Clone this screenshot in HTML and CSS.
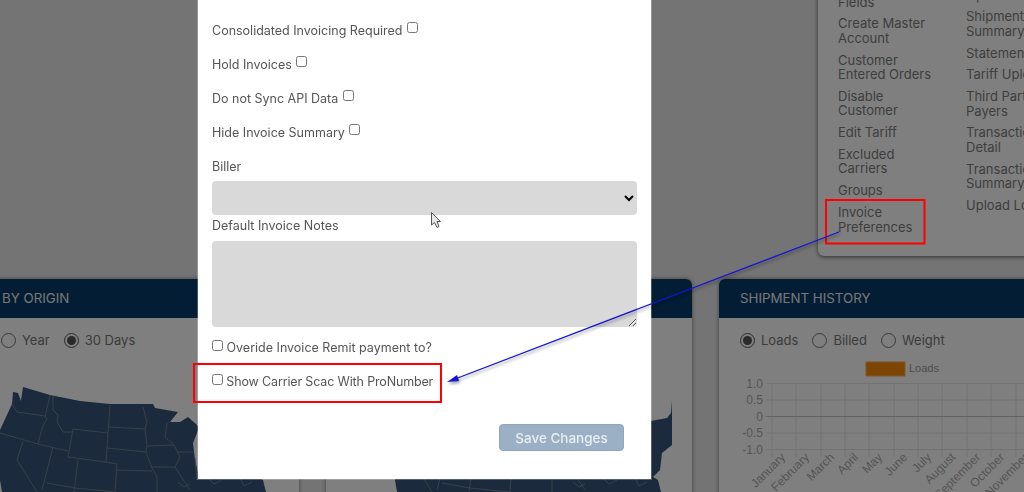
FILE: index.html
```html
<!DOCTYPE html>
<html lang="en">
<head>
    <meta charset="UTF-8">
    <meta name="viewport" content="width=device-width, initial-scale=1.0">
    <title>Invoice Preferences</title>
    <link rel="stylesheet" href="styles.css">
</head>
<body>
    <svg class="defs" width="0" height="0">
        <symbol id="usmap" viewBox="0 380 280 112">
            <path class="land" d="M-6 430L0 430L12 404L13 392L18 393L21 401L23 387L50 395L80 401L110 404L153 404L155 408L178 412L170 422L180 422L188 417L197 425L199 428L193 443L195 460L199 477L230 470L256 421L272 418L276 413L277 400L277 435L277 445L267 453L265 470L258 477L263 480L266 492L2 492L0 480Z"/>
            <path class="lines" d="M12 404L17 412L45 416M50 395L45 417L47 419L42 428L38 444M53 396L53 410L58 415L57 422L63 432L72 432M73 429L108 433L106 462L68 457ZM0 433L38 444L68 451M23 441L17 460L37 492M53 447L42 490M78 460L74 492M106 462L117 464L115 492M47 483L75 488L115 492M110 405L108 433M108 427L145 429M143 407L147 422L145 429L147 445L146 452M107 448L146 452L152 468L157 477L157 492M117 470L152 471M147 446L174 445M167 423L165 437L174 445M152 467L175 467M174 445L180 457L175 467L182 478L190 490M177 452L193 452M195 458L197 480M178 482L184 487L190 484M208 478L214 484L222 480M240 478L244 486L252 482"/>
        </symbol>
    </svg>

    <div class="dash">
        <div class="card card-first">
            <div class="card-title">BY ORIGIN</div>
            <div class="card-body">
                <div class="radios">
                    <label><input type="radio" name="r1"> Year</label>
                    <label><input type="radio" name="r1" checked> 30 Days</label>
                </div>
                <svg class="map map-first"><use href="#usmap"/></svg>
            </div>
        </div>
        <div class="card card-mid">
            <div class="card-title">BY DESTINATION</div>
            <div class="card-body">
                <div class="radios"></div>
                <svg class="map map-second"><use href="#usmap"/></svg>
            </div>
        </div>
        <div class="card card-mid">
            <div class="card-title">SHIPMENT HISTORY</div>
            <div class="card-body">
                <div class="radios">
                    <label><input type="radio" name="r3" checked> Loads</label>
                    <label><input type="radio" name="r3"> Billed</label>
                    <label><input type="radio" name="r3"> Weight</label>
                </div>
                <svg class="chart" viewBox="719 355 366 137">
                    <rect class="swatch" x="866" y="362" width="39" height="14"/>
                    <text class="legend" x="909" y="372">Loads</text>
                    <path class="grid" d="M772 383V457M796 383V457M821 383V457M845 383V457M869 383V457M894 383V457M918 383V457M942 383V457M967 383V457M991 383V457M1016 383V457M766 383.5H1040M766 400H1040M766 449.5H1040M766 433H1040"/>
                    <path class="grid-zero" d="M766 416.5H1040"/>
                    <text class="tick" x="763" y="388" text-anchor="end">1.0</text>
                    <text class="tick" x="763" y="404" text-anchor="end">0.5</text>
                    <text class="tick" x="763" y="421" text-anchor="end">0</text>
                    <text class="tick" x="763" y="437" text-anchor="end">-0.5</text>
                    <text class="tick" x="763" y="454" text-anchor="end">-1.0</text>
                    <text class="tick" text-anchor="end" transform="translate(786 458) rotate(-45)">January</text>
                    <text class="tick" text-anchor="end" transform="translate(810 458) rotate(-45)">February</text>
                    <text class="tick" text-anchor="end" transform="translate(835 458) rotate(-45)">March</text>
                    <text class="tick" text-anchor="end" transform="translate(859 458) rotate(-45)">April</text>
                    <text class="tick" text-anchor="end" transform="translate(883 458) rotate(-45)">May</text>
                    <text class="tick" text-anchor="end" transform="translate(908 458) rotate(-45)">June</text>
                    <text class="tick" text-anchor="end" transform="translate(932 458) rotate(-45)">July</text>
                    <text class="tick" text-anchor="end" transform="translate(956 458) rotate(-45)">August</text>
                    <text class="tick" text-anchor="end" transform="translate(981 458) rotate(-45)">September</text>
                    <text class="tick" text-anchor="end" transform="translate(1005 458) rotate(-45)">October</text>
                    <text class="tick" text-anchor="end" transform="translate(1029 458) rotate(-45)">November</text>
                </svg>
            </div>
        </div>
    </div>

    <div class="menu">
        <div class="menu-col">
            <a>Custom<br>Fields</a>
            <a>Create Master<br>Account</a>
            <a>Customer<br>Entered Orders</a>
            <a>Disable<br>Customer</a>
            <a>Edit Tariff</a>
            <a>Excluded<br>Carriers</a>
            <a>Groups</a>
            <a>Invoice<br>Preferences</a>
        </div>
        <div class="menu-col menu-col-right">
            <a>Open Items</a>
            <a>Shipment<br>Summary</a>
            <a>Statements</a>
            <a>Tariff Upload</a>
            <a>Third Party<br>Payers</a>
            <a>Transaction<br>Detail</a>
            <a>Transaction<br>Summary</a>
            <a>Upload Loads</a>
        </div>
    </div>

    <div class="backdrop"></div>

    <div class="modal">
        <div class="row">Consolidated Invoicing Required <input type="checkbox"></div>
        <div class="row">Hold Invoices <input type="checkbox"></div>
        <div class="row">Do not Sync API Data <input type="checkbox"></div>
        <div class="row">Hide Invoice Summary <input type="checkbox"></div>
        <label class="field-label" for="biller">Biller</label>
        <select id="biller"></select>
        <label class="field-label notes-label" for="notes">Default Invoice Notes</label>
        <textarea id="notes"></textarea>
        <div class="row row-check"><input type="checkbox"> Overide Invoice Remit payment to?</div>
        <div class="row row-check row-tight"><input type="checkbox"> Show Carrier Scac With ProNumber</div>
        <div class="actions"><button>Save Changes</button></div>
    </div>

    <!-- annotations drawn on top of the screenshot -->
    <svg class="notes-layer" viewBox="0 0 1024 492">
        <rect class="red-box" x="826" y="200" width="98.500" height="43.500"/>
        <rect class="red-box" x="194" y="364" width="247" height="38"/>
        <g class="arrow">
            <path d="M839 232L455 379"/>
            <polygon points="447,382 457,375 459,381"/>
        </g>
        <path class="pointer" d="M431.500 212.500V225L434.500 222.500L437 227.500L439 226.500L437 221.500H440.500Z"/>
    </svg>
</body>
</html>
```

FILE: styles.css
```css
* {
    box-sizing: border-box;
}
html, body {
    margin: 0;
    height: 492px;
    overflow: hidden;
}
body {
    font-family: Inter, "Open Sans", sans-serif;
    font-size: 12.5px;
    background-color: #e8e8e8;
    color: #555;
}
.defs {
    position: absolute;
}
.dash {
    display: flex;
    gap: 27px;
    margin-left: -20px;
    padding-top: 279px;
}
.card {
    flex: none;
    height: 300px;
    background-color: white;
    border-radius: 6px 6px 0 0;
    box-shadow: 0 0 4px rgba(0,0,0,0.45);
    overflow: hidden;
}
.card-first {
    width: 319px;
}
.card-first .card-title {
    padding-left: 22px;
}
.card-mid {
    width: 366px;
}
.card-title {
    height: 39px;
    line-height: 39px;
    padding-left: 21px;
    background-color: #043a68;
    color: #eee;
    font-size: 13.3px;
    font-weight: 400;
}
.card-body {
    padding-top: 12px;
}
.radios {
    display: flex;
    gap: 14px;
    height: 20px;
    padding-left: 21px;
    color: #777;
    font-size: 13px;
}
.radios label {
    display: flex;
    align-items: center;
    gap: 6px;
}
.radios input {
    width: 15px;
    height: 15px;
    margin: 0;
    accent-color: #555;
}
.map {
    display: block;
    width: 280px;
    height: 112px;
    margin-top: 30px;
    overflow: visible;
}
.map-first {
    margin-left: 20px;
}
.map-second {
    margin-left: 69px;
}
.land {
    fill: #37557a;
}
.lines {
    fill: none;
    stroke: #7f8b98;
    stroke-width: 0.8;
}
.chart {
    display: block;
    width: 366px;
    height: 137px;
    margin-top: 5px;
}
.swatch {
    fill: #fb8b08;
    stroke: #fdae50;
}
.legend, .tick {
    font-family: "Liberation Sans", sans-serif;
    font-size: 12px;
    fill: #aaa;
}
.legend {
    font-size: 11px;
    fill: #999;
}
.grid {
    fill: none;
    stroke: #e4e4e4;
}
.grid-zero {
    fill: none;
    stroke: #c4c4c4;
}
.menu {
    position: absolute;
    top: -30px;
    left: 818px;
    width: 300px;
    height: 286px;
    display: flex;
    padding: 10px 0 0 20px;
    background-color: white;
    border-radius: 6px;
    box-shadow: 0 1px 4px rgba(0,0,0,0.6);
    color: #7d7d7d;
    font-size: 13px;
    line-height: 14.500px;
}
.menu-col {
    display: flex;
    flex-direction: column;
    gap: 7.300px;
    width: 128px;
}
.menu-col-right {
    padding-top: 7.500px;
}
.backdrop {
    position: fixed;
    inset: 0;
    background-color: rgba(0,0,0,0.5);
}
.modal {
    position: absolute;
    top: 0;
    left: 198px;
    width: 453px;
    height: 479px;
    padding: 21px 14px 0;
    background-color: white;
    box-shadow: 0 0 0 1px rgba(255,255,255,0.25);
}
.row {
    height: 20px;
    line-height: 20px;
    margin-bottom: 14px;
}
.row input {
    width: 11px;
    height: 11px;
    margin: 0 0 0 1px;
    position: relative;
    top: -2px;
}
.field-label {
    display: block;
    height: 20px;
    line-height: 20px;
    margin: 2px 0 4px;
}
.notes-label {
    margin: 1px 0 5px;
}
select, textarea {
    display: block;
    width: 425px;
    border: none;
    border-radius: 4px;
    background-color: #d9d9d9;
}
select {
    height: 34px;
}
textarea {
    height: 86px;
    margin-bottom: 11px;
}
.row-check input {
    margin: 0;
    top: -1px;
}
.row-tight {
    letter-spacing: -0.150px;
}
.actions {
    display: flex;
    justify-content: flex-end;
    margin: 32px 13px 0 0;
}
button {
    width: 125px;
    height: 27px;
    padding: 0;
    background-color: #9bb0c5;
    border: 1px solid #90a6bc;
    border-radius: 4px;
    color: #e9eef3;
    font-family: inherit;
    font-size: 13.5px;
    font-weight: 500;
}
.notes-layer {
    position: absolute;
    top: 0;
    left: 0;
    width: 1024px;
    height: 492px;
    pointer-events: none;
}
.red-box {
    fill: none;
    stroke: #fe0000;
    stroke-width: 2;
}
.arrow {
    filter: drop-shadow(1px 2px 1.5px rgba(0,0,0,0.4));
}
.arrow path {
    fill: none;
    stroke: #1414d8;
    stroke-width: 1.300;
}
.arrow polygon {
    fill: #1414d8;
}
.pointer {
    fill: #e8e8e8;
    stroke: #555;
    stroke-width: 1;
}
```
